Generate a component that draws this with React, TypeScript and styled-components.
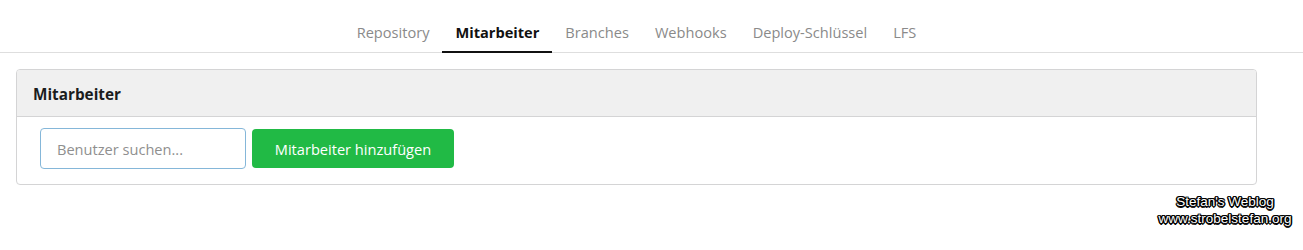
import React from "react";
import styled, { createGlobalStyle } from "styled-components";

const Global = createGlobalStyle`
  html, body { margin: 0; padding: 0; background: #fff; }
  body { font-family: "Open Sans", "Noto Sans", sans-serif; }
`;

const Page = styled.div`
  width: 1303px;
  height: 250px;
  position: relative;
  overflow: hidden;
`;

const TabBar = styled.nav`
  display: flex;
  justify-content: center;
  height: 52px;
  border-bottom: 1px solid #dedede;
  box-sizing: content-box;
  padding: 0 46px 0 16px;
`;

const Tab = styled.a<{ $active?: boolean }>`
  display: flex;
  align-items: center;
  padding: 12px 13px 0;
  margin-bottom: -1px;
  font-family: "Open Sans", sans-serif;
  font-size: 14.6px;
  color: ${(p) => (p.$active ? "#111" : "#8a8a8a")};
  font-weight: ${(p) => (p.$active ? 700 : 400)};
  border-bottom: 2px solid ${(p) => (p.$active ? "#111" : "transparent")};
  cursor: pointer;
`;

const Body = styled.div`
  padding: 16px 46px 0 16px;
`;

const Panel = styled.section`
  border: 1px solid #d4d4d5;
  border-radius: 4px;
  overflow: hidden;
`;

const PanelHeader = styled.h3`
  margin: 0;
  height: 47px;
  display: flex;
  align-items: center;
  padding: 1px 16px 0;
  box-sizing: border-box;
  background: #f0f0f0;
  border-bottom: 1px solid #d4d4d5;
  font-family: "Open Sans", sans-serif;
  font-size: 15.3px;
  font-weight: 700;
  color: #1b1c1d;
`;

const PanelBody = styled.div`
  display: flex;
  align-items: center;
  gap: 6px;
  padding: 11px 23px 15px;
`;

const Input = styled.input`
  box-sizing: border-box;
  width: 206px;
  height: 41px;
  border: 1px solid #85b7d9;
  border-radius: 4px;
  padding: 0 16px;
  font-family: "Open Sans", sans-serif;
  font-size: 14.6px;
  color: #333;
  outline: none;
  &::placeholder { color: #8f8f8f; }
`;

const Button = styled.button`
  box-sizing: border-box;
  width: 202px;
  height: 39px;
  border: none;
  border-radius: 4px;
  background: #21ba45;
  color: #fff;
  font-family: "Open Sans", sans-serif;
  font-size: 14.6px;
  font-weight: 400;
  cursor: pointer;
`;

const Watermark = styled.div`
  position: absolute;
  left: 1155px;
  width: 140px;
  top: 193px;
  text-align: center;
  font-family: "Liberation Sans", Arial, sans-serif;
  font-size: 13.5px;
  line-height: 17px;
  color: #fff;
  text-shadow:
    -1px -1px 0 #000, 1px -1px 0 #000, -1px 1px 0 #000, 1px 1px 0 #000,
    0 -1.5px 0 #000, 0 1.5px 0 #000, -1.5px 0 0 #000, 1.5px 0 0 #000;
`;

const tabs = ["Repository", "Mitarbeiter", "Branches", "Webhooks", "Deploy-Schlüssel", "LFS"];

export default function App() {
  return (
    <Page>
      <Global />
      <TabBar>
        {tabs.map((t) => (
          <Tab key={t} $active={t === "Mitarbeiter"}>
            {t}
          </Tab>
        ))}
      </TabBar>
      <Body>
        <Panel>
          <PanelHeader>Mitarbeiter</PanelHeader>
          <PanelBody>
            <Input placeholder="Benutzer suchen..." />
            <Button>Mitarbeiter hinzufügen</Button>
          </PanelBody>
        </Panel>
      </Body>
      <Watermark>
        Stefan's Weblog
        <br />
        www.strobelstefan.org
      </Watermark>
    </Page>
  );
}
